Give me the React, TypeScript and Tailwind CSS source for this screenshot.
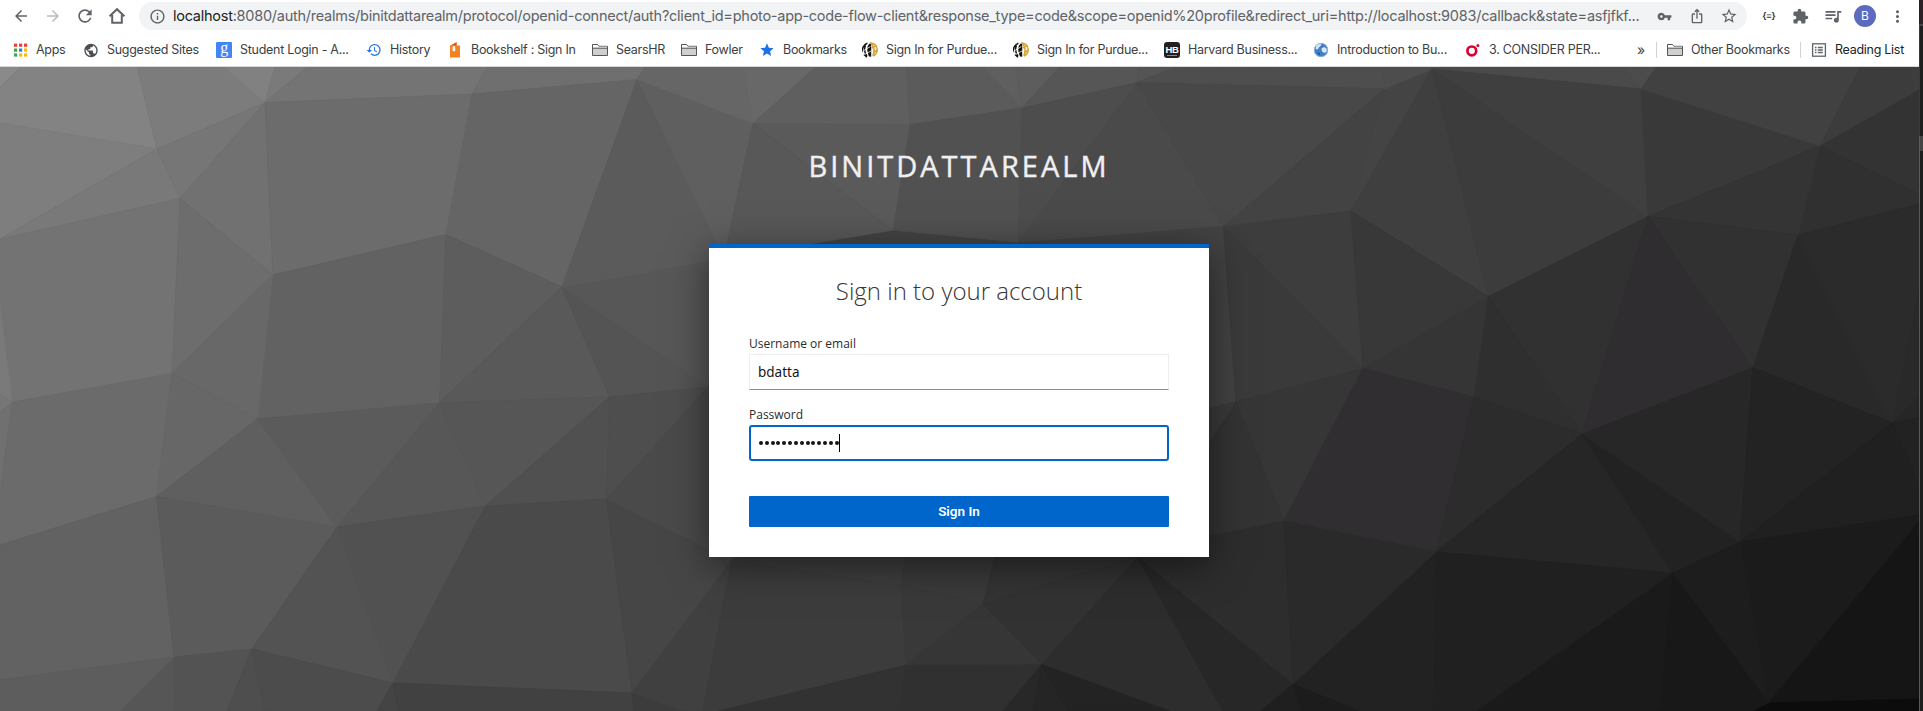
import React from "react";
import {
  MdArrowBack,
  MdArrowForward,
  MdRefresh,
  MdInfoOutline,
  MdVpnKey,
  MdIosShare,
  MdStarBorder,
  MdExtension,
  MdQueueMusic,
  MdMoreVert,
  MdHistory,
  MdPublic,
  MdStar,
} from "react-icons/md";

/* ---------- low-poly backdrop ---------- */

const vertices: Record<string, string> = {
  V1: "157,149", V2: "265,102.5", V3: "180,198.5", V4: "273,275", V5: "0,239",
  V6: "172,373.5", V7: "472,94", V8: "446,234.5", V9: "637,79.500", V10: "562,287",
  W1: "12.4,402", W2: "156.5,496.5", W3: "257.5,419", W4: "439.5,403", W5: "609.5,397",
  W6: "337,527", W7: "485.5,506", W8: "606.5,499", W9: "174,657", W10: "252,649",
  W11: "393,683", W12: "632,693",
  A: "753,123.5", B: "910,124.5", C: "893,231", D: "1022,108", E: "1018,243",
  F: "1137,82.5", G: "1223.5,226.5", H: "1384.5,89", I: "1432,69", J: "1351,211",
  K: "1641,89", L: "1648,216.5", M: "1820,146", N: "1914,93", O: "1798,235",
  P: "1488.6,296.5", Q: "1363,368.5", R: "1753,367.5", S: "1582,434", T: "1474,397",
  U: "1284,521", V: "1436,552", W: "1236,401.5", X: "1740,542", Y: "1672.6,573",
  Z: "1892.5,423", AA: "1768.5,703", BB: "1293,684", CC: "1137.5,557",
  DD: "1042,664", EE: "983,604", FF: "906,665", GG: "901,585", HH: "731.6,561",
  II: "708,387", JJ: "724,259",
};

const faces: [string, number | string][] = [
  ["0,67 21,67 0,87", 138],
  ["21,67 137,67 V1 0,123 0,87", 131],
  ["137,67 224,67 V2 V1", 124],
  ["224,67 275,67 V2", 129],
  ["275,67 308,67 V2", 122],
  ["0,123 V1 V5", 126],
  ["V1 V3 V5", 121],
  ["V1 V2 V3", 118],
  ["V2 V4 V3", 113],
  ["308,67 487,67 V7 V2", 116],
  ["487,67 645,67 V9 V7", 111],
  ["V2 V7 V8 V4", 108],
  ["V7 V9 V10 V8", 101],
  ["V5 V3 V6 W1 0,303", 115],
  ["V3 V4 V6", 109],
  ["0,303 W1 0,394", 122],
  ["0,394 W1 0,413", 118],
  ["0,413 W1 0,493", 112],
  ["V4 V8 W4 W3", 98],
  ["V4 W3 V6", 104],
  ["V8 V10 W4", 93],
  ["V10 W5 W4", 89],
  ["V10 II W5", 84],
  ["V10 JJ II", 87],
  ["V9 JJ V10", 91],
  ["V9 A JJ", 95],
  ["645,67 743,67 A V9", 102],
  ["743,67 816,67 A", 104],
  ["816,67 906.5,67 B A", 95],
  ["A B C", 90],
  ["A C JJ", 88],
  ["W1 V6 W2 0,545 0,493", 107],
  ["V6 W3 W2", 103],
  ["W2 W3 W6", 95],
  ["W3 W4 W6", 91],
  ["W4 W7 W6", 87],
  ["W4 W5 W7", 86],
  ["W5 W8 W7", 80],
  ["W5 II W8", 78],
  ["W2 W9 0,680 0,545", 98],
  ["W2 W6 W10 W9", 91],
  ["W6 W11 W10", 83],
  ["W6 W7 W11", 81],
  ["W7 W8 W12 W11", 74],
  ["0,680 W9 120,711 0,711", 93],
  ["W9 175,711 120,711", 86],
  ["W9 W10 227,711 175,711", 83],
  ["W10 264.5,711 227,711", 78],
  ["W10 W11 377,711 264.5,711", 76],
  ["W11 399,711 377,711", 68],
  ["W11 W12 634,711 399,711", 65],
  ["W8 HH W12", 70],
  ["W8 II 800,400 800,561 HH", 74],
  ["W12 683.5,711 634,711", 60],
  ["W12 HH 703,711 683.5,711", 64],
  ["HH GG FF 719,711 703,711", 60],
  ["FF 900,711 719,711", 50],
  ["FF DD 1003,711 900,711", 48],
  ["HH 740,540 908,540 GG", 62],
  ["GG 908,540 998,540 EE", 58],
  ["GG EE FF", 57],
  ["EE DD FF", 54],
  ["EE 1000,540 1150,540 CC", 52],
  ["EE CC DD", 50],
  ["DD 1033,711 1003,711", 40],
  ["DD 1068,711 1033,711", 37],
  ["DD 1171.5,711 1068,711", 35],
  ["CC 1223,711 1171.5,711 DD", 45],
  ["CC BB 1261,711 1223,711", 39],
  ["CC U BB", 45],
  ["906.5,67 982.5,67 D B", 91],
  ["982.5,67 1015.6,67 D", 95],
  ["1015.6,67 1059.5,67 D", 93],
  ["1059.5,67 1139,67 F D", 86],
  ["1139,67 1177,67 F", 84],
  ["B D E C", 81],
  ["D F E", 77],
  ["F G E", 74],
  ["1177,67 1383.5,67 H F", 78],
  ["F H G", 72],
  ["C E 1000,330 800,330 JJ", 68],
  ["E G W 1180,418 1000,300", 66],
  ["G H J", 67],
  ["H I J", 68],
  ["1383.5,67 1435,67 I H", 77],
  ["1435,67 1623,67 K I", 74],
  ["1623,67 1656.5,67 K", 76],
  ["I J P", 63],
  ["I P L", 60],
  ["I L K", 63],
  ["K L M", 57],
  ["K M 1860,67 1656.5,67", 65],
  ["M N 1910.5,67 1860,67", 60],
  ["N 1910.5,67 1919,67 1919,90", 62],
  ["M N 1919,90 1919,194", 51],
  ["M 1919,194 1919,204 O", 48],
  ["L M O", 52],
  ["G J Q", 61],
  ["J P Q", 56],
  ["P L S", 49],
  ["L R S", "#302d30"],
  ["L O R", 49],
  ["O R Z", 41],
  ["O 1919,204 1919,290 Z", 43],
  ["Z 1919,290 1919,397", 41],
  ["Z 1919,397 1919,418", 38],
  ["Z 1919,418 1919,487", 34],
  ["G Q W", 58],
  ["W Q U", 54],
  ["P T Q", 53],
  ["P S T", 47],
  ["Q T V U", "#312e31"],
  ["T S V", 44],
  ["S V Y", 38],
  ["S X Y", 34],
  ["S R X", 39],
  ["R Z X", 35],
  ["X Z 1919,487 1919,515", 32],
  ["X 1919,515 1919,522 AA", 27],
  ["AA 1919,522 1919,699", 21],
  ["AA 1919,699 1919,711 1752,711", 12],
  ["Y X AA", 29],
  ["Y AA 1752,711 1659.6,711", 24],
  ["Y 1659.6,711 1476,711", 26],
  ["V Y 1476,711 1433,711", 32],
  ["V 1433,711 1359,711 BB", 34],
  ["BB 1301,711 1359,711", 28],
  ["BB 1261,711 1301,711", 31],
  ["U V BB", 42],
  ["W 1200,411 1200,458", 58],
  ["W U 1200,538 1200,458", 51],
  ["U CC 1180,545 1200,538", 46],
];

function toPoints(face: string) {
  return face
    .split(" ")
    .map((token) => vertices[token] ?? token)
    .join(" ");
}

function Backdrop() {
  return (
    <svg
      className="absolute inset-0 h-full w-full"
      viewBox="0 67 1919 644"
      preserveAspectRatio="none"
      aria-hidden="true"
    >
      <rect x="0" y="67" width="1919" height="644" fill="#353535" />
      {faces.map(([points, tone], index) => {
        const fill = typeof tone === "number" ? `rgb(${tone},${tone},${tone})` : tone;
        return (
          <polygon key={index} points={toPoints(points)} fill={fill} stroke={fill} strokeWidth="0.7" />
        );
      })}
    </svg>
  );
}

/* ---------- icons ---------- */

function HomeIcon() {
  return (
    <svg viewBox="0 0 18 18" className="size-[18px]" fill="none" stroke="#5f6368" strokeWidth="2">
      <path d="M1.6 9.3 9 2.2l7.4 7.1" />
      <path d="M4.2 8v7.8h9.6V8" />
    </svg>
  );
}

function AppsIcon() {
  const colors = ["#ea4335", "#ea4335", "#ea4335", "#34a853", "#1a87f0", "#fbbc04", "#34a853", "#fbbc04", "#fbbc04"];
  return (
    <svg viewBox="0 0 16 16" className="size-4">
      {colors.map((c, i) => (
        <rect key={i} x={2 + (i % 3) * 5} y={1.6 + Math.floor(i / 3) * 4.9} width="3.2" height="3.2" fill={c} />
      ))}
    </svg>
  );
}

function GoogleIcon() {
  return (
    <span className="flex size-4 items-center justify-center rounded-[1px] bg-[#4285f4] pb-[4px] font-['Liberation_Serif',serif] text-[16px] leading-none text-white">
      g
    </span>
  );
}

function ShelfIcon() {
  return (
    <svg viewBox="0 0 16 16" className="size-4">
      <path d="M3 3.6 9.6.3v3.3H13v12H3z" fill="#f58220" />
      <path d="M5 2.7 9.6.3v3.3z" fill="#d9532c" />
      <rect x="5.6" y="4.2" width="2.6" height="5" rx=".8" fill="#fff" />
    </svg>
  );
}

function FolderIcon() {
  return (
    <svg viewBox="0 0 16 16" className="size-4" fill="#cfcfcf" stroke="#555" strokeWidth="1">
      <path d="M.5 13.5v-11h5l1.4 1.8h8.6v9.2z" />
      <path d="M1 3h4.3l1.4 1.8H15v.9H1z" fill="#fff" stroke="none" />
      <path d="M.5 6.2h15" fill="none" />
    </svg>
  );
}

function PurdueIcon() {
  return (
    <svg viewBox="0 0 16 16" className="size-4" fill="none">
      <path d="M7.8 1.6C4.800 3.600 4.400 9 7 14.500l2.200.2V2z" fill="#111" />
      <path d="M5.400 1.300C1.600 2.600-.2 6.500.6 10M2 12.500l3 2.800M3.400 3.500C2 7 2.600 11 5 14" stroke="#111" strokeWidth="1.500" />
      <path d="M.3 9.500 8.400 4.500M2.500 12.500 9 9" stroke="#fff" strokeWidth=".8" />
      <path d="M8 .9c3.800-.3 7 2.700 7.200 6.300.1 3-1.500 5.600-4.200 6.900" stroke="#d6a22c" strokeWidth="1.500" />
      <path d="M9.200 1.500c3 2.800 3.900 8 1.700 12.400M9.400 6.200l4.800-2.700M11 10.500l4-2" stroke="#d6a22c" strokeWidth="1.500" />
    </svg>
  );
}

function HarvardIcon() {
  return (
    <span className="flex size-4 flex-col items-center justify-center rounded-[3px] bg-[#231f20] font-['Liberation_Sans',sans-serif] text-[9.500px] leading-[10px] font-bold text-white">
      HB
      <span className="h-px w-2.5 bg-[#8a8a8a]" />
    </span>
  );
}

function GlobeIcon() {
  return (
    <svg viewBox="0 0 16 16" className="size-4">
      <circle cx="8" cy="8" r="7" fill="#3f7fcb" />
      <circle cx="8" cy="8" r="6.700" fill="none" stroke="#9db4d6" strokeWidth=".8" />
      <path d="M3 3.500c1.500-1.500 4-2 5.500-1.400L7.600 4 6 5.500l-1.300 2L2.500 7z" fill="#cfe0f2" />
      <path d="M8.500 6.500 11 5l2.500 1.500.3 3L11.500 11 9 9.500z" fill="#dceaf7" />
      <path d="M4 10.500l3 .5-.5 2.500z" fill="#1f4f9c" />
    </svg>
  );
}

function RedRingIcon() {
  return (
    <svg viewBox="0 0 16 16" className="size-4">
      <circle cx="6.800" cy="8.900" r="4.400" fill="none" stroke="#dc0032" strokeWidth="2.700" />
      <circle cx="12.900" cy="3.600" r="1.500" fill="#dc0032" />
    </svg>
  );
}

function ReadingListIcon() {
  return (
    <svg viewBox="0 0 16 16" className="size-4" fill="none" stroke="#5f6368" strokeWidth="1.300">
      <rect x="1.600" y="1.800" width="12.800" height="12.400" />
      <path d="M4 5.500h1.500M6.800 5.500h5M4 8h1.500M6.800 8h5M4 10.500h1.500M6.800 10.500h5" />
    </svg>
  );
}

/* ---------- browser chrome ---------- */

const bookmarks: { label: string; width: string; icon: React.ReactNode }[] = [
  { label: "Apps", width: "w-[71px]", icon: <AppsIcon /> },
  { label: "Suggested Sites", width: "w-[133px]", icon: <MdPublic className="size-[17px] text-[#4a4d51]" /> },
  { label: "Student Login - A...", width: "w-[150px]", icon: <GoogleIcon /> },
  { label: "History", width: "w-[81px]", icon: <MdHistory className="size-4 text-[#1a73e8]" /> },
  { label: "Bookshelf : Sign In", width: "w-[145px]", icon: <ShelfIcon /> },
  { label: "SearsHR", width: "w-[89px]", icon: <FolderIcon /> },
  { label: "Fowler", width: "w-[78px]", icon: <FolderIcon /> },
  { label: "Bookmarks", width: "w-[103px]", icon: <MdStar className="size-4 text-[#1a73e8]" /> },
  { label: "Sign In for Purdue...", width: "w-[151px]", icon: <PurdueIcon /> },
  { label: "Sign In for Purdue...", width: "w-[151px]", icon: <PurdueIcon /> },
  { label: "Harvard Business...", width: "w-[149px]", icon: <HarvardIcon /> },
  { label: "Introduction to Bu...", width: "w-[152px]", icon: <GlobeIcon /> },
  { label: "3. CONSIDER PER...", width: "w-[172px]", icon: <RedRingIcon /> },
];

function Toolbar() {
  return (
    <div className="flex h-8 items-center pl-3 text-[#5f6368]">
      <MdArrowBack className="size-[18px]" />
      <MdArrowForward className="ml-[14px] size-[18px] text-[#b9bbbe]" />
      <MdRefresh className="ml-[13px] size-[20px]" />
      <span className="ml-[13px]">
        <HomeIcon />
      </span>
      <div className="ml-[13px] flex h-7 w-[1608px] items-center rounded-full bg-[#f1f3f4] pl-[10px]">
        <MdInfoOutline className="size-[17px]" />
        <span className="ml-[7px] w-[1478px] text-[14.500px] tracking-[-0.255px] whitespace-nowrap">
          <span className="text-[#202124]">localhost</span>
          :8080/auth/realms/binitdattarealm/protocol/openid-connect/auth?client_id=photo-app-code-flow-client&amp;response_type=code&amp;scope=openid%20profile&amp;redirect_uri=http://localhost:9083/callback&amp;state=asfjfkf...
        </span>
        <MdVpnKey className="ml-[6px] size-[15px]" />
        <MdIosShare className="ml-[17px] size-4" />
        <MdStarBorder className="ml-[15px] size-[18px]" />
      </div>
      <span className="ml-[15px] w-[14px] text-center text-[9px] font-bold text-[#3c4043]">{"{≡}"}</span>
      <MdExtension className="ml-[16px] size-[17px]" />
      <MdQueueMusic className="ml-[14px] size-[20px]" />
      <span className="ml-[11px] flex size-[22px] items-center justify-center rounded-full bg-[#5c6bc0] text-[12px] text-white">
        B
      </span>
      <MdMoreVert className="ml-[12px] size-[19px]" />
    </div>
  );
}

function BookmarksBar() {
  return (
    <div className="flex h-[34px] items-center pt-[2px] pl-3 text-[12.500px] tracking-[-0.280px] whitespace-nowrap text-[#3c4043]">
      {bookmarks.map((item, index) => (
        <div key={index} className={`flex shrink-0 items-center gap-2 ${item.width}`}>
          <span className="flex size-4 shrink-0 items-center justify-center">{item.icon}</span>
          <span>{item.label}</span>
        </div>
      ))}
      <span className="w-[19px] pb-[2px] text-[14px]">»</span>
      <span className="h-4 w-px bg-[#d0d2d5]" />
      <div className="ml-[10px] flex w-[133px] shrink-0 items-center gap-2">
        <FolderIcon />
        <span>Other Bookmarks</span>
      </div>
      <span className="h-4 w-px bg-[#d0d2d5]" />
      <div className="ml-[10px] flex items-center gap-2 text-[#202124]">
        <ReadingListIcon />
        <span>Reading List</span>
      </div>
    </div>
  );
}

/* ---------- login card ---------- */

function PasswordDots() {
  return (
    <span className="flex items-center gap-[1.830px]">
      {Array.from({ length: 14 }, (_, i) => (
        <span key={i} className="size-1 rounded-full bg-[#151515]" />
      ))}
    </span>
  );
}

function LoginCard() {
  return (
    <div className="h-[313px] w-[500px] border-t-4 border-[#06c] bg-white px-10 shadow-[0_8px_36px_rgba(0,0,0,0.5)]">
      <h1 className="pt-[26px] text-center text-[24px] leading-[34px] font-light text-[#363636]">
        Sign in to your account
      </h1>
      <label className="mt-[26px] block pb-px text-[12px] leading-[19px] text-[#2b2b2b]">Username or email</label>
      <div className="flex h-9 items-center border border-[#ededed] border-b-[#8a8d90] pl-2 font-['Noto_Sans',sans-serif] text-[13.500px] text-[#151515]">
        bdatta
      </div>
      <label className="mt-[15px] block pb-px text-[12px] leading-[19px] text-[#2b2b2b]">Password</label>
      <div className="flex h-9 items-center rounded-[3px] border-2 border-[#06c] pl-[8px]">
        <PasswordDots />
        <span className="h-[18px] w-px bg-black" />
      </div>
      <button className="mt-[35px] flex h-[31px] w-full items-center justify-center rounded-[1px] bg-[#06c] pb-px font-[Roboto,sans-serif] text-[13.500px] font-semibold text-white">
        Sign In
      </button>
    </div>
  );
}

export default function App() {
  return (
    <div className="flex h-[711px] w-[1923px] overflow-hidden bg-[#1e1e1e] font-[Inter,sans-serif]">
      <div className="flex w-[1919px] flex-col">
        <header className="h-[67px] border-b border-[#d5d8da] bg-white">
          <Toolbar />
          <BookmarksBar />
        </header>
        <main className="relative h-[644px] font-['Open_Sans',sans-serif]">
          <Backdrop />
          <div className="relative flex flex-col items-center pr-px">
            <div className="pt-[79px] text-[29px] leading-[40px] tracking-[3px] whitespace-nowrap text-[#f0f0f0] [-webkit-text-stroke:0.4px_#f0f0f0]">
              BINITDATTAREALM
            </div>
            <div className="mt-[58px]">
              <LoginCard />
            </div>
          </div>
        </main>
      </div>
      <div className="flex w-1 flex-col">
        <span className="h-6 bg-[#2a2226]" />
        <span className="h-0.5 bg-[#454545]" />
        <span className="h-[110px] border-l border-[#3a3a3a]" />
        <span className="h-[15px] border-l border-[#5a5a5a] bg-[#444]" />
        <span className="grow border-l border-[#5a5a5a]" />
      </div>
    </div>
  );
}
